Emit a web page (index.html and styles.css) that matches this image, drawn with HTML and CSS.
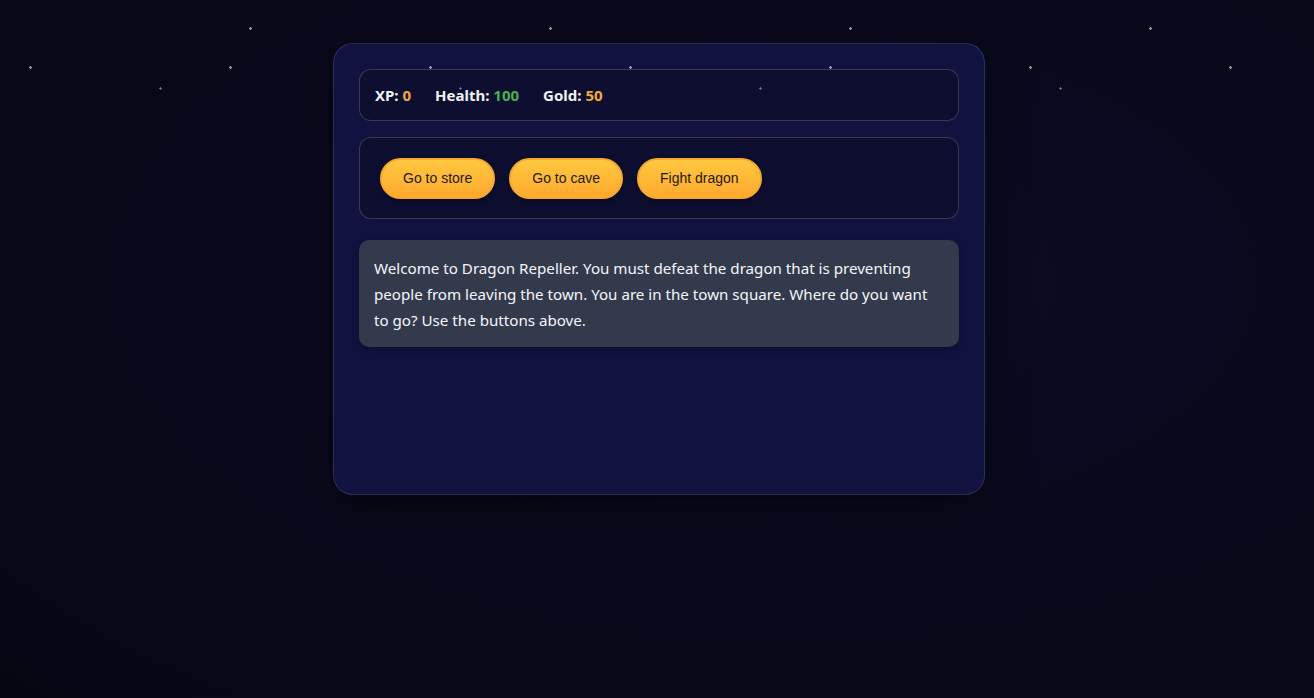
FILE: index.html
```html
<!DOCTYPE html>
<html lang="en">
<head>
<meta charset="utf-8">
<title>Dragon Repeller</title>
<link rel="stylesheet" href="styles.css">
</head>
<body>
<div class="stars"></div>
<main class="game">
  <div class="stats">
    <span class="stat">XP: <strong class="gold">0</strong></span>
    <span class="stat">Health: <strong class="green">100</strong></span>
    <span class="stat">Gold: <strong class="gold">50</strong></span>
  </div>
  <div class="controls">
    <button class="btn">Go to store</button>
    <button class="btn">Go to cave</button>
    <button class="btn">Fight dragon</button>
  </div>
  <div class="text">Welcome to Dragon Repeller. You must defeat the dragon that is preventing people from leaving the town. You are in the town square. Where do you want to go? Use the buttons above.</div>
</main>
</body>
</html>
```
FILE: styles.css
```css
* { box-sizing: border-box; }
html, body { height: 100%; }
body {
  margin: 0;
  padding-top: 43px;
  background: radial-gradient(ellipse at 60% 40%, #0c0c24 0%, #09091b 55%, #060613 100%);
  font-family: "Noto Sans", "Open Sans", sans-serif;
  color: #f1f1f5;
  display: flex;
  justify-content: center;
  align-items: flex-start;
}
.stars {
  position: fixed;
  inset: 0;
  pointer-events: none;
  z-index: 5;
  background-image:
    radial-gradient(circle at 250.5px 28.5px, rgba(180,180,200,0.85) 0 1px, transparent 1.5px),
    radial-gradient(circle at 30.5px 67.5px, rgba(180,180,200,0.85) 0 1px, transparent 1.5px),
    radial-gradient(circle at 160.5px 88.5px, rgba(170,170,190,0.7) 0 0.9px, transparent 1.3px);
  background-size: 300px 100px, 200px 100px, 300px 100px;
  background-repeat: repeat-x;
}
.game {
  width: 652px;
  height: 452px;
  margin-left: 4px;
  padding: 25px;
  background: #11123f;
  border: 1px solid rgba(255,255,255,0.12);
  border-radius: 20px;
  box-shadow: 0 10px 40px rgba(0,0,0,0.55);
}
.stats {
  display: flex;
  gap: 24px;
  padding: 15px 15px;
  background: #0e0e30;
  border: 1px solid rgba(255,255,255,0.18);
  border-radius: 12px;
  font-size: 15px;
  line-height: 20px;
  font-weight: 700;
  margin-bottom: 16px;
}
.stat strong { font-weight: 700; }
.gold { color: #f5a83a; }
.green { color: #4caf50; }
.controls {
  display: flex;
  gap: 14px;
  padding: 20px 20px 19px;
  background: #0e0e30;
  border: 1px solid rgba(255,255,255,0.18);
  border-radius: 12px;
  margin-bottom: 21px;
}
.btn {
  font-family: "Liberation Sans", Arial, sans-serif;
  font-size: 14px;
  line-height: 15px;
  color: #1e1a12;
  padding: 11px 21px;
  border: 2px solid #f6a92e;
  border-radius: 22px;
  background: linear-gradient(180deg, #ffc840 0%, #ffa92e 100%);
  box-shadow: 0 2px 6px rgba(0,0,0,0.3);
  cursor: pointer;
}
.text {
  padding: 15px 15px 14px;
  background: #323a4c;
  border-radius: 10px;
  font-size: 15.15px;
  line-height: 26px;
  color: #f6f6fa;
  box-shadow: 0 2px 8px rgba(0,0,0,0.25);
}
```
